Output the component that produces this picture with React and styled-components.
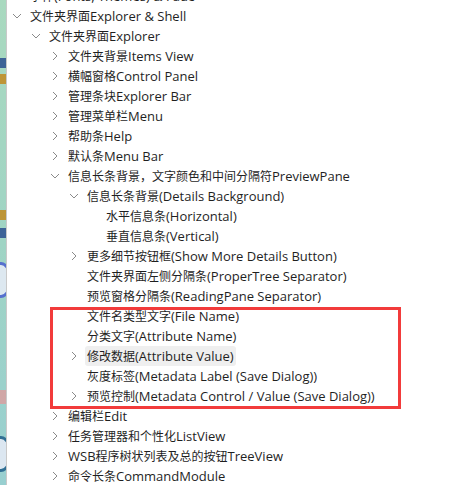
import React from "react";
import styled, { createGlobalStyle } from "styled-components";

const GlobalStyle = createGlobalStyle`
  html, body {
    margin: 0;
    padding: 0;
    background: #ffffff;
    overflow: hidden;
  }
  body {
    font-family: "Open Sans", "Noto Sans CJK SC", sans-serif;
  }
`;

const tree = [
  { level: 1, text: "字体(Fonts, Themes) & Fade", chevron: "right" },
  { level: 1, text: "文件夹界面Explorer & Shell", chevron: "down" },
  { level: 2, text: "文件夹界面Explorer", chevron: "down" },
  { level: 3, text: "文件夹背景Items View", chevron: "right" },
  { level: 3, text: "横幅窗格Control Panel", chevron: "right" },
  { level: 3, text: "管理条块Explorer Bar", chevron: "right" },
  { level: 3, text: "管理菜单栏Menu", chevron: "right" },
  { level: 3, text: "帮助条Help", chevron: "right" },
  { level: 3, text: "默认条Menu Bar", chevron: "right" },
  { level: 3, text: "信息长条背景，文字颜色和中间分隔符PreviewPane", chevron: "down" },
  { level: 4, text: "信息长条背景(Details Background)", chevron: "down" },
  { level: 5, text: "水平信息条(Horizontal)" },
  { level: 5, text: "垂直信息条(Vertical)" },
  { level: 4, text: "更多细节按钮框(Show More Details Button)", chevron: "right" },
  { level: 4, text: "文件夹界面左侧分隔条(ProperTree Separator)" },
  { level: 4, text: "预览窗格分隔条(ReadingPane Separator)" },
  { level: 4, text: "文件名类型文字(File Name)" },
  { level: 4, text: "分类文字(Attribute Name)" },
  { level: 4, text: "修改数据(Attribute Value)", chevron: "right", hover: true },
  { level: 4, text: "灰度标签(Metadata Label (Save Dialog))" },
  { level: 4, text: "预览控制(Metadata Control / Value (Save Dialog))", chevron: "right" },
  { level: 3, text: "编辑栏Edit", chevron: "right" },
  { level: 3, text: "任务管理器和个性化ListView", chevron: "right" },
  { level: 3, text: "WSB程序树状列表及总的按钮TreeView", chevron: "right" },
  { level: 3, text: "命令长条CommandModule", chevron: "right" },
];

const desktopBits = [
  { gap: 58, h: 10, color: "#2a4f8f" },
  { gap: 6, h: 10, color: "#c28a1e" },
  { gap: 126, h: 10, color: "#c28a1e" },
  { gap: 8, h: 10, color: "#2a4f8f" },
  { gap: 24, h: 30, color: "#4a5fd0", round: true },
  { gap: 92, h: 14, color: "#d9a0a0" },
  { gap: 32, h: 30, color: "#1f5f8a", round: true },
];

const CJK = /([\u3000-\u9fff\uff00-\uffef]+)/;

const Chevron = ({ dir }) => (
  <svg width="10" height="10" viewBox="0 0 10 10">
    {dir === "down" ? (
      <path d="M1 3 L5 7 L9 3" fill="none" stroke="#8a8a8a" strokeWidth="1" />
    ) : (
      <path d="M3 1 L7 5 L3 9" fill="none" stroke="#8a8a8a" strokeWidth="1" />
    )}
  </svg>
);

const Text = ({ children }) =>
  children
    .split(CJK)
    .filter(Boolean)
    .map((part, i) => (CJK.test(part) ? <Han key={i}>{part}</Han> : <span key={i}>{part}</span>));

export default function App() {
  return (
    <>
      <GlobalStyle />
      <Screen>
        <DesktopStrip>
          {desktopBits.map((b, i) => (
            <DesktopBit key={i} $gap={b.gap} $h={b.h} $color={b.color} $round={b.round} />
          ))}
        </DesktopStrip>
        <Panel>
          <Tree>
            {tree.map((item, i) => (
              <Row key={i} $level={item.level}>
                <Toggle>{item.chevron && <Chevron dir={item.chevron} />}</Toggle>
                <Label $hover={item.hover}>
                  <Text>{item.text}</Text>
                </Label>
              </Row>
            ))}
          </Tree>
          <Highlight />
        </Panel>
      </Screen>
    </>
  );
}

const Screen = styled.div`
  display: flex;
  width: 454px;
  height: 485px;
  overflow: hidden;
`;

const DesktopStrip = styled.div`
  display: flex;
  flex-direction: column;
  flex: 0 0 6px;
  overflow: hidden;
  background: linear-gradient(180deg, #a9d9bf 0%, #9fd4c4 50%, #98cfd0 100%);
  border-right: 1px solid #c9c9c9;
`;

const DesktopBit = styled.div`
  flex: 0 0 ${({ $h }) => $h}px;
  margin-top: ${({ $gap }) => $gap}px;
  width: ${({ $round }) => ($round ? 16 : 6)}px;
  margin-left: ${({ $round }) => ($round ? -10 : 0)}px;
  border-radius: ${({ $round }) => ($round ? "50%" : "0")};
  background: ${({ $round, $color }) => ($round ? "#e8ecf8" : $color)};
  border: ${({ $round, $color }) => ($round ? `3px solid ${$color}` : "none")};
  opacity: 0.85;
`;

const Panel = styled.div`
  position: relative;
  flex: 1;
  background: #ffffff;
`;

const Tree = styled.ul`
  list-style: none;
  margin: -14px 0 0 0;
  padding: 0;
`;

const Row = styled.li`
  display: flex;
  align-items: center;
  height: 20px;
  padding-left: ${({ $level }) => 3 + ($level - 1) * 19}px;
`;

const Toggle = styled.span`
  display: flex;
  align-items: center;
  justify-content: center;
  width: 14px;
  height: 20px;
  margin-right: 6px;
`;

const Label = styled.span`
  font-size: 13px;
  line-height: 20px;
  color: #1f1f1f;
  white-space: nowrap;
  padding: 0 2px;
  margin-left: -2px;
  border-radius: 3px;
  background: ${({ $hover }) => ($hover ? "#efefef" : "transparent")};
`;

const Han = styled.span`
  font-family: "Noto Sans CJK SC", sans-serif;
  font-size: 12px;
`;

const Highlight = styled.div`
  position: absolute;
  left: 43px;
  top: 307px;
  width: 345px;
  height: 96px;
  border: 3px solid #f23b3b;
`;
